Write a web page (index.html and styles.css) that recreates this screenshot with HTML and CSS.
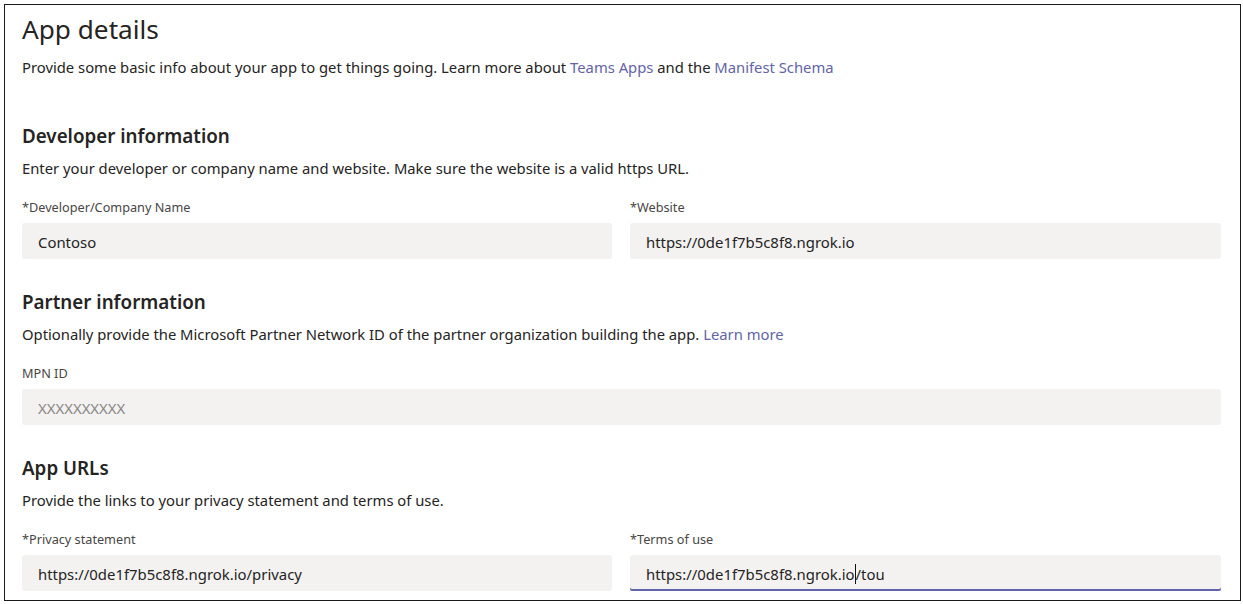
FILE: index.html
```html
<!DOCTYPE html>
<html lang="en">
<head>
<meta charset="utf-8">
<title>App details</title>
<link rel="stylesheet" href="styles.css">
</head>
<body>
<div class="frame">
  <h1 class="title">App details</h1>
  <p class="lead">Provide some basic info about your app to get things going. Learn more about <a class="link" href="#">Teams Apps</a> and the <a class="link" href="#">Manifest Schema</a></p>

  <section class="section first">
    <h2 class="heading">Developer information</h2>
    <p class="desc">Enter your developer or company name and website. Make sure the website is a valid https URL.</p>
    <div class="row two">
      <div class="field">
        <div class="label">*Developer/Company Name</div>
        <div class="input">Contoso</div>
      </div>
      <div class="field">
        <div class="label">*Website</div>
        <div class="input">https://0de1f7b5c8f8.ngrok.io</div>
      </div>
    </div>
  </section>

  <section class="section">
    <h2 class="heading">Partner information</h2>
    <p class="desc">Optionally provide the Microsoft Partner Network ID of the partner organization building the app. <a class="link" href="#">Learn more</a></p>
    <div class="row">
      <div class="field">
        <div class="label">MPN ID</div>
        <div class="input placeholder">XXXXXXXXXX</div>
      </div>
    </div>
  </section>

  <section class="section">
    <h2 class="heading">App URLs</h2>
    <p class="desc">Provide the links to your privacy statement and terms of use.</p>
    <div class="row two">
      <div class="field">
        <div class="label">*Privacy statement</div>
        <div class="input">https://0de1f7b5c8f8.ngrok.io/privacy</div>
      </div>
      <div class="field">
        <div class="label">*Terms of use</div>
        <div class="input focused">https://0de1f7b5c8f8.ngrok.i<span class="caret">o</span>/tou</div>
      </div>
    </div>
  </section>
</div>
</body>
</html>
```

FILE: styles.css
```css
* { box-sizing: border-box; }
html, body { margin: 0; padding: 0; background: #ffffff; }
body {
  font-family: "Noto Sans", "Open Sans", "Liberation Sans", sans-serif;
  color: #252423;
  overflow: hidden;
}
.frame {
  margin: 4px 2px 0 4px;
  height: 597px;
  border: 1px solid #1b1b1b;
  padding: 9px 19px 0 17px;
  overflow: hidden;
}
.title {
  margin: 0;
  font-size: 26.2px;
  line-height: 32px;
  font-weight: 400;
  color: #252423;
  position: relative;
  top: -1px;
}
.lead {
  margin: 11px 0 0;
  font-size: 14.8px;
  line-height: 20px;
}
.link { color: #6264a7; text-decoration: none; }
.section { margin-top: 31px; }
.section.first { margin-top: 47px; }
.heading {
  margin: 0;
  font-size: 18.8px;
  line-height: 24px;
  font-weight: 600;
  color: #252423;
}
.desc {
  margin: 10px 0 0;
  font-size: 14.8px;
  line-height: 20px;
}
.row {
  margin-top: 21px;
  display: grid;
  grid-template-columns: 1fr;
}
.row.two {
  grid-template-columns: 590px 591px;
  column-gap: 18px;
}
.label {
  font-size: 12.7px;
  line-height: 16px;
  color: #484644;
}
.input {
  margin-top: 8px;
  height: 36px;
  background: #f3f2f1;
  border-radius: 3px;
  padding: 0 16px;
  font-size: 14.9px;
  line-height: 38px;
  color: #252423;
  white-space: nowrap;
}
.input.placeholder { color: #8a8886; }
.input.focused {
  box-shadow: inset 0 -2px 0 #6264a7;
  border-radius: 3px 3px 2px 2px;
}
.caret {
  border-right: 1px solid #111111;
}
```
